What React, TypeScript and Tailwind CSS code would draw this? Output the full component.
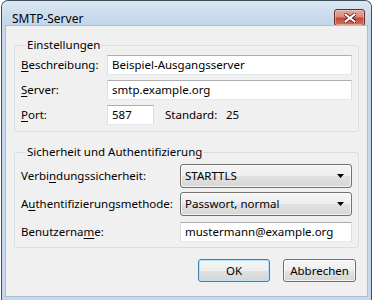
import type { ReactNode } from "react";

// accelerator letter, underlined like the dialog's mnemonics
function U({ children }: { children: ReactNode }) {
  return <span className="underline underline-offset-[2px] decoration-[1px]">{children}</span>;
}

function TextBox({ value, className = "" }: { value: string; className?: string }) {
  return (
    <div
      className={[
        "h-[20px] flex items-center bg-white pl-[4px]",
        "border border-t-[#abadb3] border-x-[#dbdfe6] border-b-[#e3e9ef]",
        className,
      ].join(" ")}
    >
      {value}
    </div>
  );
}

function Combo({ value }: { value: string }) {
  return (
    <div className="h-[24px] flex items-center justify-between rounded-[3px] border border-[#707070] bg-[linear-gradient(#f5f5f5_0%,#eeeeee_50%,#e1e1e1_50%,#d6d6d6_100%)] pl-[4px] pr-[7px] shadow-[inset_0_0_0_1px_rgba(255,255,255,0.7)]">
      <span>{value}</span>
      <svg width="7" height="4" viewBox="0 0 7 4" aria-hidden="true">
        <path d="M0 0h7L3.5 4z" fill="#000" />
      </svg>
    </div>
  );
}

function Button({ label, primary }: { label: string; primary?: boolean }) {
  return (
    <button
      className={[
        "h-[23px] rounded-[3px] border bg-[linear-gradient(#f5f5f5_0%,#eeeeee_50%,#e1e1e1_50%,#d6d6d6_100%)]",
        primary
          ? "w-[72px] border-[#3c7fb1] shadow-[inset_0_0_0_1px_#b6e3f8]"
          : "w-[73px] border-[#707070] shadow-[inset_0_0_0_1px_rgba(255,255,255,0.7)]",
      ].join(" ")}
    >
      {label}
    </button>
  );
}

export default function App() {
  return (
    <div className="w-[374px] h-[300px] bg-white font-['Noto_Sans',sans-serif] text-[11.5px] leading-[14px] text-black">
      <div className="ml-[1px] w-[371px] h-[300px] flex flex-col overflow-hidden rounded-t-[7px] border-x border-t border-[#414e5c] bg-[#c4d7eb]">
        {/* title bar */}
        <div className="h-[24px] flex items-start justify-between pl-[10px] pr-[6px] bg-[linear-gradient(#dae6f2,#c2d6eb)]">
          <span className="mt-[11px] text-[12px]">SMTP-Server</span>
          <button className="mt-[8px] w-[31px] h-[17px] flex items-center justify-center rounded-[3px] border border-[#6b2a22] bg-[linear-gradient(#e7aa9d_0%,#d98a7b_45%,#c1493a_55%,#d3705c_100%)] shadow-[inset_0_0_0_1px_rgba(255,220,210,0.45)]">
            <svg width="12" height="10" viewBox="0 0 12 10" aria-hidden="true">
              <path d="M1.5 1.5l9 7M10.5 1.5l-9 7" stroke="#4a1c16" strokeWidth="3.6" strokeLinecap="square" />
              <path d="M1.5 1.5l9 7M10.5 1.5l-9 7" stroke="#fff" strokeWidth="2" strokeLinecap="square" />
            </svg>
          </button>
        </div>

        {/* client area */}
        <div className="flex-1 flex px-[3px] pb-[3px]">
          <div className="flex-1 flex flex-col border border-[#aebfd1] bg-[#f0f0f0] px-[8px] pt-[12px]">
            <fieldset className="rounded-[3px] border border-[#d5dfe5] pl-[6px] pr-[6px] pb-[6px]">
              <legend className="ml-[5px] px-[1px]">Einstellungen</legend>
              <div className="mt-[3px] grid grid-cols-[86px_1fr] items-center gap-y-[5px]">
                <span>
                  <U>B</U>eschreibung:
                </span>
                <TextBox value="Beispiel-Ausgangsserver" />
                <span>
                  <U>S</U>erver:
                </span>
                <TextBox value="smtp.example.org" />
                <span>
                  <U>P</U>ort:
                </span>
                <div className="flex items-center">
                  <TextBox value="587" className="w-[47px]" />
                  <span className="ml-[11px] w-[61px]">Standard:</span>
                  <span>25</span>
                </div>
              </div>
            </fieldset>

            <fieldset className="mt-[13px] rounded-[3px] border border-[#d5dfe5] pl-[6px] pr-[6px] pb-[5px]">
              <legend className="ml-[5px] px-[1px]">Sicherheit und Authentifizierung</legend>
              <div className="mt-[5px] grid grid-cols-[159px_1fr] items-center gap-y-[4px]">
                <span>
                  Verbi<U>n</U>dungssicherheit:
                </span>
                <Combo value="STARTTLS" />
                <span>
                  A<U>u</U>thentifizierungsmethode:
                </span>
                <Combo value="Passwort, normal" />
                <span className="mt-[2px]">
                  Benutzerna<U>m</U>e:
                </span>
                <TextBox value="mustermann@example.org" className="mt-[2px]" />
              </div>
            </fieldset>

            <div className="mt-[11px] mr-[3px] flex justify-end gap-[13px]">
              <Button label="OK" primary />
              <Button label="Abbrechen" />
            </div>
          </div>
        </div>
      </div>
    </div>
  );
}
